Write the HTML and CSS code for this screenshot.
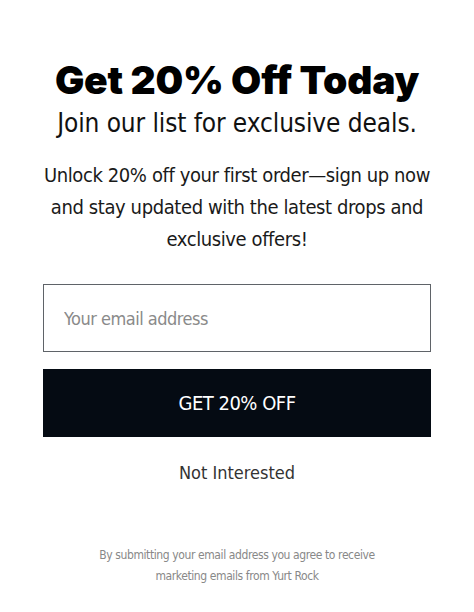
FILE: index.html
```html
<!DOCTYPE html>
<html lang="en">
<head>
    <meta charset="UTF-8">
    <title>Get 20% Off Today</title>
    <link rel="stylesheet" href="styles.css">
</head>
<body>

<div class="popup">
    <h1 class="title">Get 20% Off Today</h1>
    <p class="subtitle">Join our list for exclusive deals.</p>
    <p class="lead">Unlock 20% off your first order—sign up now and stay updated with the latest drops and exclusive offers!</p>

    <form class="signup" onsubmit="return false">
        <input type="email" name="email" placeholder="Your email address">
        <button type="submit">GET 20% OFF</button>
    </form>

    <a href="#" class="dismiss">Not Interested</a>

    <p class="fineprint">By submitting your email address you agree to receive marketing emails from Yurt Rock</p>
</div>

</body>
</html>
```

FILE: styles.css
```css
body {
    margin: 0;
    background-color: #ffffff;
    font-family: 'DejaVu Sans Condensed', 'DejaVu Sans', sans-serif;
    color: #111;
}
.popup {
    padding: 57px 43px 20px;
    display: flex;
    flex-direction: column;
    align-items: center;
    text-align: center;
}
.title {
    margin: 0;
    font-family: 'Inter', sans-serif;
    font-weight: 900;
    font-size: 39px;
    line-height: 46px;
    color: #000;
    letter-spacing: -0.2px;
}
.subtitle {
    margin: 3px 0 0;
    font-size: 26px;
    line-height: 34px;
    letter-spacing: -0.1px;
}
.lead {
    margin: 19px -8px 0;
    font-size: 20px;
    line-height: 32px;
    letter-spacing: -0.4px;
    color: #1a1a1a;
}
.signup {
    width: 100%;
    margin-top: 29px;
    display: flex;
    flex-direction: column;
    gap: 17px;
}
input, button {
    box-sizing: border-box;
    width: 100%;
    height: 68px;
    font-family: inherit;
    border-radius: 0;
}
input {
    border: 1px solid #5f6368;
    padding: 0 20px;
    font-size: 18px;
    letter-spacing: -0.5px;
    color: #111;
}
input::placeholder {
    color: #8a8a8a;
}
button {
    border: none;
    background-color: #050b13;
    color: #fff;
    font-size: 20px;
    letter-spacing: -0.5px;
    cursor: pointer;
}
.dismiss {
    margin-top: 25px;
    font-size: 18px;
    color: #333;
    text-decoration: none;
}
.fineprint {
    margin: 62px 0 0;
    max-width: 300px;
    font-size: 12px;
    line-height: 21px;
    letter-spacing: -0.4px;
    color: #888;
}
```
